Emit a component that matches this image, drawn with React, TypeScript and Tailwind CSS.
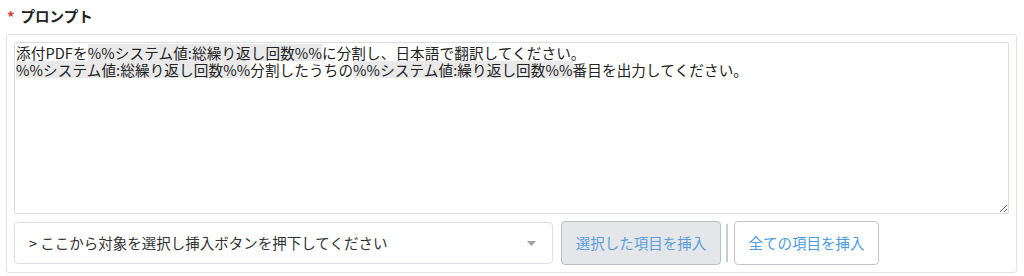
import { useState } from "react";

const font = { fontFamily: '"Noto Sans CJK JP", "Noto Sans", sans-serif' };

function Var({ children }: { children: React.ReactNode }) {
  return <span className="inline-block h-[17px] leading-[17px] bg-[#e9e9ea] align-top">{children}</span>;
}

export default function App() {
  const [selected] = useState("");

  return (
    <div
      className="w-[1024px] h-[276px] bg-white text-[#333] overflow-hidden"
      style={font}
    >
      <div className="flex items-center h-[34px] pl-[7px] pb-[1px]">
        <span className="text-[15px] font-bold mr-[6px] leading-none text-[#e53935]">*</span>
        <span className="text-[14.5px] font-bold text-[#222] leading-none">プロンプト</span>
      </div>

      <div className="mx-[6px] w-[1011px] border border-[#dfe2e7] rounded-[3px] p-[7px] flex flex-col gap-[7px]">
        <div className="h-[172px] border border-[#d8dbe0] rounded-[2px] px-[1px] py-[1px] text-[14.6px] leading-[17px] text-[#222] resize-y overflow-auto">
          <div className="h-[17px] tracking-[0.1px] whitespace-nowrap">
            添付PDFを<Var>%%システム値:総繰り返し回数%%</Var>に分割し、日本語で翻訳してください。
          </div>
          <div className="h-[17px] tracking-[0.1px] whitespace-nowrap">
            <Var>%%システム値:総繰り返し回数%%</Var>分割したうちの<Var>%%システム値:繰り返し回数%%</Var>番目を出力してください。
          </div>
        </div>

        <div className="flex items-center h-[44px]">
          <div className="w-[539px] h-[42px] border border-[#dcdfe5] rounded-[4px] flex items-center pl-[14px] pr-[12px] text-[14.5px] text-[#333]">
            <span className="flex-1">{selected || "> ここから対象を選択し挿入ボタンを押下してください"}</span>
            <svg width="9" height="5" viewBox="0 0 9 5" className="mr-[4px]">
              <path d="M0 0 L9 0 L4.5 5 Z" fill="#a0a0a0" />
            </svg>
          </div>
          <button className="ml-[8px] w-[160px] h-[44px] bg-[#e4e6ea] border border-[#babec5] rounded-[4px] text-[14.5px] text-[#5a9fdc]">
            選択した項目を挿入
          </button>
          <div className="ml-[5px] w-[2px] h-[38px] bg-[#c9ccd1]" />
          <button className="ml-[6px] w-[145px] h-[44px] bg-white border border-[#c2c6cc] rounded-[4px] text-[14.5px] text-[#4a9be0]">
            全ての項目を挿入
          </button>
        </div>
      </div>
    </div>
  );
}
